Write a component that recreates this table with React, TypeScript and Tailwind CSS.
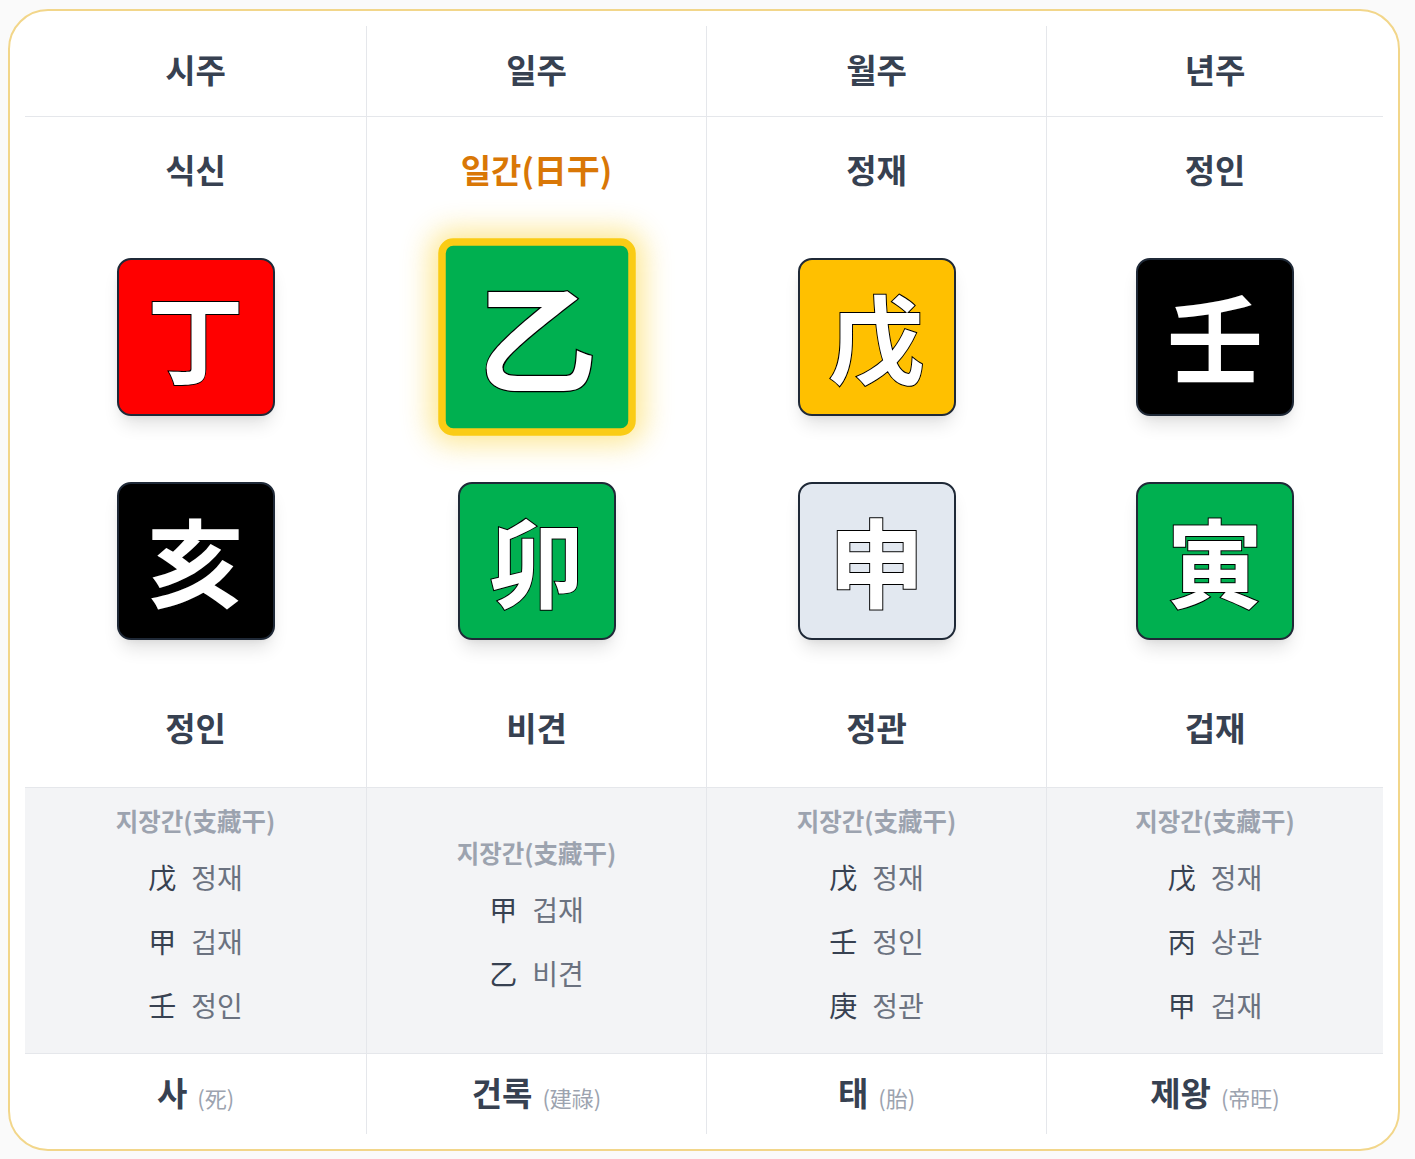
import React from "react";

type Col = {
  title: string;
  tenGod: string;
  isDay?: boolean;
  stem: string;
  stemBg: string;
  branch: string;
  branchBg: string;
  branchGod: string;
  hidden: [string, string][];
  stage: string;
  stageHanja: string;
};

const cols: Col[] = [
  {
    title: "시주",
    tenGod: "식신",
    stem: "丁",
    stemBg: "bg-[#ff0000]",
    branch: "亥",
    branchBg: "bg-black",
    branchGod: "정인",
    hidden: [
      ["戊", "정재"],
      ["甲", "겁재"],
      ["壬", "정인"],
    ],
    stage: "사",
    stageHanja: "(死)",
  },
  {
    title: "일주",
    tenGod: "일간(日干)",
    isDay: true,
    stem: "乙",
    stemBg: "bg-[#00b050]",
    branch: "卯",
    branchBg: "bg-[#00b050]",
    branchGod: "비견",
    hidden: [
      ["甲", "겁재"],
      ["乙", "비견"],
    ],
    stage: "건록",
    stageHanja: "(建祿)",
  },
  {
    title: "월주",
    tenGod: "정재",
    stem: "戊",
    stemBg: "bg-[#ffc000]",
    branch: "申",
    branchBg: "bg-[#e2e8f0]",
    branchGod: "정관",
    hidden: [
      ["戊", "정재"],
      ["壬", "정인"],
      ["庚", "정관"],
    ],
    stage: "태",
    stageHanja: "(胎)",
  },
  {
    title: "년주",
    tenGod: "정인",
    stem: "壬",
    stemBg: "bg-black",
    branch: "寅",
    branchBg: "bg-[#00b050]",
    branchGod: "겁재",
    hidden: [
      ["戊", "정재"],
      ["丙", "상관"],
      ["甲", "겁재"],
    ],
    stage: "제왕",
    stageHanja: "(帝旺)",
  },
];

const font = "font-['Noto_Sans_CJK_KR',sans-serif]";

function Box({ ch, bg, day }: { ch: string; bg: string; day?: boolean }) {
  const base =
    "w-[158px] h-[158px] flex items-center justify-center text-white font-bold text-[96px] leading-none [-webkit-text-stroke:2px_#000] [paint-order:stroke_fill]";
  if (day) {
    return (
      <div
        className={`${base} ${bg} scale-125 rounded-[12px] border-[6px] border-[#facc15] shadow-[0_0_22px_6px_rgba(250,204,21,0.45)]`}
      >
        <span className="-translate-y-[2px]">{ch}</span>
      </div>
    );
  }
  return (
    <div
      className={`${base} ${bg} rounded-[14px] border-2 border-[#1f2937] shadow-[0_12px_18px_-4px_rgba(0,0,0,0.12),0_4px_8px_-4px_rgba(0,0,0,0.08)]`}
    >
      <span className="-translate-y-[2px]">{ch}</span>
    </div>
  );
}

export default function App() {
  return (
    <div className={`min-h-[1159px] w-[1415px] bg-[#fafafa] pl-[8px] pt-[9px] ${font}`}>
      <div className="w-[1392px] h-[1142px] rounded-[40px] border-2 border-[#f2d68a] bg-white p-[15px]">
        <div className="grid grid-cols-[342px_340px_340px_336px]">
          {cols.map((c, i) => (
            <div
              key={c.title}
              className={`flex flex-col ${i < 3 ? "border-r border-[#e5e7eb]" : ""}`}
            >
              <div className="h-[91px] border-b border-[#e5e7eb] flex items-center justify-center">
                <span className="text-[33px] leading-10 font-bold text-[#374151] -translate-y-[2px]">
                  {c.title}
                </span>
              </div>
              <div className="h-[671px] border-b border-[#e5e7eb] flex flex-col items-center pt-[33px]">
                <span
                  className={`h-10 text-[33px] leading-10 font-bold -translate-y-[1px] ${
                    c.isDay ? "text-[#d97706]" : "text-[#374151]"
                  }`}
                >
                  {c.tenGod}
                </span>
                <div className="mt-[68px]">
                  <Box ch={c.stem} bg={c.stemBg} day={c.isDay} />
                </div>
                <div className="mt-[66px]">
                  <Box ch={c.branch} bg={c.branchBg} />
                </div>
                <span className="mt-[68px] h-10 text-[33px] leading-10 font-bold text-[#374151] -translate-y-[1px]">
                  {c.branchGod}
                </span>
              </div>
              <div className="h-[266px] border-b border-[#e5e7eb] bg-[#f3f4f6] flex flex-col items-center justify-center pb-[12px]">
                <span className="h-8 text-[24.5px] leading-8 font-bold text-[#9ca3af]">
                  지장간(支藏干)
                </span>
                <div className="mt-[20px] flex flex-col items-center gap-[24px]">
                  {c.hidden.map(([h, g]) => (
                    <div key={h + g} className="h-10 flex items-center gap-[15px] text-[28px] leading-10">
                      <span className="text-[#374151]">{h}</span>
                      <span className="text-[#6b7280]">{g}</span>
                    </div>
                  ))}
                </div>
              </div>
              <div className="h-[80px] flex items-center justify-center gap-[10px] -translate-y-[2px]">
                <span className="text-[33px] leading-10 font-bold text-[#374151]">{c.stage}</span>
                <span className="text-[22px] leading-10 text-[#9ca3af] translate-y-[5px]">{c.stageHanja}</span>
              </div>
            </div>
          ))}
        </div>
      </div>
    </div>
  );
}
